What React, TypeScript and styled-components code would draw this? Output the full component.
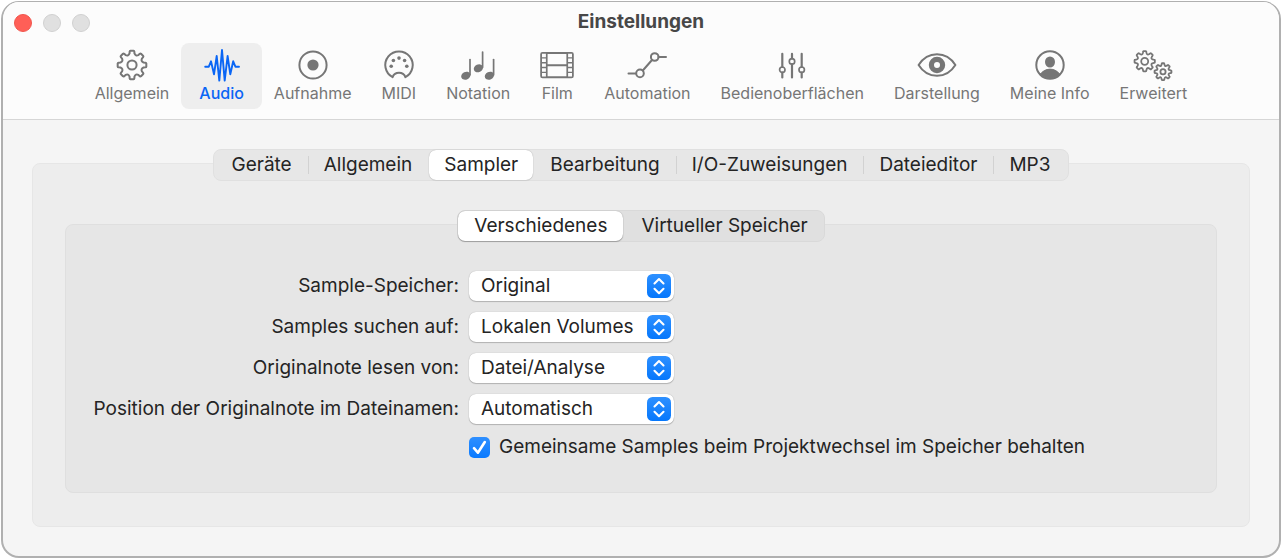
import React, { useState } from "react";
import styled, { createGlobalStyle, css } from "styled-components";

const GlobalStyle = createGlobalStyle`
  *, *::before, *::after { box-sizing: border-box; }
  body {
    margin: 0;
    background: #ffffff;
    color: #242424;
    font-family: Inter, "Liberation Sans", sans-serif;
    font-size: 19px;
    line-height: 24px;
  }
  button, select, input { font: inherit; color: inherit; }
`;

const Window = styled.main`
  margin: 1px 1px 2px;
  border: 2px solid #b0b0b0;
  border-top-width: 1px;
  border-radius: 18px;
  background: #f5f5f5;
  overflow: hidden;
`;

const Header = styled.header`
  background: #fcfcfc;
  border-bottom: 1px solid #d6d6d6;
  padding-bottom: 10px;
`;

const TitleBar = styled.div`
  display: grid;
  grid-template-columns: 1fr auto 1fr;
  align-items: center;
  height: 41px;
  padding: 0 11px;
`;

const Lights = styled.div`
  display: flex;
  gap: 11px;
`;

const Light = styled.button<{ $close?: boolean }>`
  width: 18px;
  height: 18px;
  padding: 0;
  border-radius: 50%;
  border: 1px solid ${(p) => (p.$close ? "#f0564e" : "#d0d0d0")};
  background: ${(p) => (p.$close ? "#ff5f57" : "#e0e0e0")};
`;

const Title = styled.h1`
  margin: 0;
  padding-bottom: 1px;
  font-size: 19px;
  line-height: 24px;
  font-weight: 700;
  color: #474747;
`;

const Toolbar = styled.nav`
  display: flex;
  justify-content: center;
`;

const Tool = styled.button<{ $active: boolean }>`
  display: flex;
  flex-direction: column;
  align-items: center;
  height: 66px;
  padding: 6px 15px 0;
  border: 0;
  border-radius: 8px;
  background: none;
  color: #767676;
  font-size: 16px;
  line-height: 22px;
  white-space: nowrap;
  ${(p) =>
    p.$active &&
    css`
      margin: 0 -3px;
      padding: 6px 18px 0;
      background: #eeeeee;
      color: #0a66f5;
      font-weight: 500;
    `}
  svg {
    display: block;
    height: 32px;
    margin-bottom: 1px;
    overflow: visible;
  }
`;

const Content = styled.div`
  padding: 29px;
`;

const Group = styled.section`
  display: flex;
  flex-direction: column;
`;

const Panel = styled.div<{ $inner?: boolean }>`
  margin-top: -18px;
  border-radius: 8px;
  border: 1px solid ${(p) => (p.$inner ? "#dfdfdf" : "#e6e6e6")};
  background: ${(p) => (p.$inner ? "#e6e6e6" : "#ededed")};
  padding: ${(p) => (p.$inner ? "46px 28px 33px" : "46px 32px 33px")};
`;

const Segments = styled.div<{ $inner?: boolean }>`
  position: relative;
  z-index: 1;
  align-self: center;
  display: flex;
  align-items: center;
  gap: 2px;
  height: 32px;
  padding: ${(p) => (p.$inner ? "0" : "0 3px")};
  border: 1px solid ${(p) => (p.$inner ? "#d9d9d9" : "#e0e0e0")};
  border-radius: 8px;
  background: ${(p) => (p.$inner ? "#e0e0e0" : "#e7e7e7")};
`;

const Segment = styled.button<{ $active: boolean; $inner?: boolean; $divided: boolean }>`
  display: flex;
  align-items: center;
  height: 30px;
  padding: ${(p) => (p.$inner ? "0 16px 1px" : "0 15px 1px")};
  border: 0;
  border-radius: 7px;
  background: none;
  white-space: nowrap;
  ${(p) =>
    p.$active &&
    css`
      background: #ffffff;
      box-shadow: 0 0 1px rgba(0, 0, 0, 0.35), 0 1px 1px rgba(0, 0, 0, ${p.$inner ? 0.25 : 0.05});
    `}
  ${(p) =>
    p.$divided &&
    css`
      &::before {
        content: "";
        flex: none;
        width: 1px;
        height: 18px;
        margin: 0 15px 0 -16px;
        background: #d2d2d2;
      }
    `}
`;

const Form = styled.form`
  display: grid;
  grid-template-columns: 365px minmax(0, 1fr);
  column-gap: 10px;
  row-gap: 11px;
  align-items: center;
`;

const FieldLabel = styled.label`
  justify-self: end;
  white-space: nowrap;
`;

const SelectBox = styled.div`
  position: relative;
  width: 205px;
  height: 30px;
  svg {
    position: absolute;
    top: 3px;
    right: 3px;
    pointer-events: none;
  }
`;

const Select = styled.select`
  appearance: none;
  display: block;
  width: 100%;
  height: 100%;
  padding: 0 30px 0 12px;
  border: 0;
  border-radius: 7px;
  background: #ffffff;
  box-shadow: 0 0 1px rgba(0, 0, 0, 0.3), 0 1px 1px rgba(0, 0, 0, 0.2);
`;

const CheckLabel = styled.label`
  grid-column: 2;
  display: flex;
  align-items: center;
  gap: 9px;
  white-space: nowrap;
`;

const CheckBox = styled.span`
  position: relative;
  width: 21px;
  height: 21px;
  svg {
    position: absolute;
    inset: 0;
    pointer-events: none;
  }
`;

const CheckInput = styled.input`
  appearance: none;
  display: block;
  width: 21px;
  height: 21px;
  margin: 0;
  border-radius: 5px;
  background: #ffffff;
  &:checked {
    background: linear-gradient(#2e8fff, #0a7aff);
  }
  &:not(:checked) + svg {
    display: none;
  }
`;

/* Closed outline of an eight-toothed gear around (cx, cy). */
function gear(cx: number, cy: number, outer: number, inner: number) {
  const at = (deg: number, r: number) => {
    const a = ((deg - 90) * Math.PI) / 180;
    return `${(cx + r * Math.cos(a)).toFixed(2)} ${(cy + r * Math.sin(a)).toFixed(2)}`;
  };
  let d = "";
  for (let i = 0; i < 8; i++) {
    const c = i * 45;
    d += `${i ? "L" : "M"}${at(c - 12, inner + 0.8)}L${at(c - 10, outer - 0.8)}Q${at(c - 9, outer)} ${at(c - 6, outer)}`;
    d += `L${at(c + 6, outer)}Q${at(c + 9, outer)} ${at(c + 10, outer - 0.8)}L${at(c + 12, inner + 0.8)}`;
    d += `Q${at(c + 22.5, inner - 1.6)} ${at(c + 33, inner + 0.8)}`;
  }
  return d + "Z";
}

type IconProps = { w: number; stroke?: number; children: React.ReactNode };
const Icon = ({ w, stroke = 2, children }: IconProps) => (
  <svg
    width={w}
    height={32}
    viewBox={`0 0 ${w} 32`}
    fill="none"
    stroke="currentColor"
    strokeWidth={stroke}
    strokeLinecap="round"
    strokeLinejoin="round"
    aria-hidden="true"
  >
    {children}
  </svg>
);

const Note = ({ x, y }: { x: number; y: number }) => (
  <g>
    <ellipse cx={x} cy={y} rx="4.8" ry="3.8" transform={`rotate(-25 ${x} ${y})`} fill="currentColor" stroke="none" />
    <path d={`M${x + 4.2} ${y - 1}V${y - 16.2}`} strokeWidth="1.7" />
  </g>
);

const tools: { name: string; icon: React.ReactNode }[] = [
  {
    name: "Allgemein",
    icon: (
      <Icon w={32}>
        <path d={gear(16, 16, 14.4, 11)} />
        <circle cx="16" cy="16" r="4.6" />
      </Icon>
    ),
  },
  {
    name: "Audio",
    icon: (
      <Icon w={36} stroke={1.9}>
        <path d="M1.2 17.7H4.8L7 12.3L10 25.3L12.7 7L15.3 31.6L18 1L20.7 31.6L23.6 7L26.3 25.3L29.2 12.3L31.4 17.7H35" />
      </Icon>
    ),
  },
  {
    name: "Aufnahme",
    icon: (
      <Icon w={32}>
        <circle cx="16" cy="16" r="13.6" />
        <circle cx="16" cy="16" r="5.6" fill="currentColor" stroke="none" />
      </Icon>
    ),
  },
  {
    name: "MIDI",
    icon: (
      <Icon w={32}>
        <path d="M9.6 28.2A13.7 13.7 0 1 1 22.4 28.2C21.4 25.4 19 23.8 16 23.8S10.6 25.4 9.6 28.2Z" />
        <g fill="currentColor" stroke="none">
          <circle cx="8.2" cy="17.2" r="1.8" />
          <circle cx="10.4" cy="11.5" r="1.8" />
          <circle cx="16" cy="9.1" r="1.8" />
          <circle cx="21.6" cy="11.5" r="1.8" />
          <circle cx="23.8" cy="17.2" r="1.8" />
        </g>
      </Icon>
    ),
  },
  {
    name: "Notation",
    icon: (
      <Icon w={34}>
        <Note x={4.8} y={26.7} />
        <Note x={17.4} y={19.3} />
        <Note x={28.4} y={26.7} />
      </Icon>
    ),
  },
  {
    name: "Film",
    icon: (
      <Icon w={34}>
        <path
          fill="currentColor"
          stroke="none"
          fillRule="evenodd"
          d={
            "M2.5 3H31.5A2.3 2.3 0 0 1 33.8 5.3V27A2.3 2.3 0 0 1 31.5 29.3H2.5A2.3 2.3 0 0 1 .2 27V5.3A2.3 2.3 0 0 1 2.5 3Z" +
            "M7.6 5H26.4V15.2H7.6ZM7.6 17.2H26.4V27.3H7.6Z" +
            [4.8, 9.5, 14.4, 19.3, 24.1].map((y) => `M2 ${y}H5.9V${y + 3.4}H2ZM28.1 ${y}H32V${y + 3.4}H28.1Z`).join("")
          }
        />
      </Icon>
    ),
  },
  {
    name: "Automation",
    icon: (
      <Icon w={38}>
        <path d="M.5 24.4H8M14.8 21.5L24 11M30.5 8H38" />
        <circle cx="12" cy="24.4" r="3.8" />
        <circle cx="26.7" cy="8" r="3.8" />
      </Icon>
    ),
  },
  {
    name: "Bedienoberflächen",
    icon: (
      <Icon w={26} stroke={2.2}>
        <path d="M3.3 4.8V18M3.3 23.6V28.4M13 4.8V9.6M13 15.2V28.4M22.7 4.8V18M22.7 23.6V28.4" />
        <g strokeWidth="1.7">
          <circle cx="3.3" cy="20.7" r="2.7" />
          <circle cx="13" cy="12.4" r="2.7" />
          <circle cx="22.7" cy="20.7" r="2.7" />
        </g>
      </Icon>
    ),
  },
  {
    name: "Darstellung",
    icon: (
      <Icon w={40}>
        <path d="M1.6 16C6 9 12.5 5.2 20 5.2S34 9 38.4 16C34 23 27.5 26.8 20 26.8S6 23 1.6 16Z" />
        <circle cx="20" cy="16" r="5.6" strokeWidth="5.2" />
      </Icon>
    ),
  },
  {
    name: "Meine Info",
    icon: (
      <Icon w={32}>
        <circle cx="16" cy="16" r="13.7" />
        <ellipse cx="16" cy="13" rx="5" ry="5.6" fill="currentColor" stroke="none" />
        <path d="M6.5 25A11.6 11.6 0 0 1 25.5 25A13.3 13.3 0 0 1 6.5 25Z" fill="currentColor" strokeWidth="1" />
      </Icon>
    ),
  },
  {
    name: "Erweitert",
    icon: (
      <Icon w={40} stroke={1.8}>
        <path d={gear(11.7, 12.3, 10.2, 7.8)} />
        <circle cx="11.7" cy="12.3" r="3.5" />
        <path d={gear(30, 22.7, 8.5, 6.5)} />
        <circle cx="30" cy="22.7" r="2.6" />
      </Icon>
    ),
  },
];

type TabsProps = { label: string; items: string[]; initial: number; inner?: boolean };
function Tabs({ label, items, initial, inner }: TabsProps) {
  const [current, setCurrent] = useState(initial);
  return (
    <Segments role="tablist" aria-label={label} $inner={inner}>
      {items.map((item, i) => (
        <Segment
          key={item}
          type="button"
          role="tab"
          aria-selected={i === current}
          $active={i === current}
          $inner={inner}
          $divided={i > 0 && i !== current && i !== current + 1}
          onClick={() => setCurrent(i)}
        >
          {item}
        </Segment>
      ))}
    </Segments>
  );
}

const fields = [
  { id: "storage", label: "Sample-Speicher:", value: "Original" },
  { id: "search", label: "Samples suchen auf:", value: "Lokalen Volumes" },
  { id: "root", label: "Originalnote lesen von:", value: "Datei/Analyse" },
  { id: "position", label: "Position der Originalnote im Dateinamen:", value: "Automatisch" },
];

const Chevrons = () => (
  <svg width="24" height="24" viewBox="0 0 24 24" aria-hidden="true">
    <defs>
      <linearGradient id="chevron-fill" x1="0" y1="0" x2="0" y2="1">
        <stop offset="0" stopColor="#2e90ff" />
        <stop offset="1" stopColor="#0577fc" />
      </linearGradient>
    </defs>
    <rect width="24" height="24" rx="5.5" fill="url(#chevron-fill)" />
    <path
      d="M7.5 9.4L12 5L16.5 9.4M7.5 14.8L12 19.2L16.5 14.8"
      fill="none"
      stroke="#ffffff"
      strokeWidth="2.1"
      strokeLinecap="round"
      strokeLinejoin="round"
    />
  </svg>
);

export default function App() {
  const [tool, setTool] = useState("Audio");
  return (
    <>
      <GlobalStyle />
      <Window>
        <Header>
          <TitleBar>
            <Lights>
              <Light type="button" $close aria-label="Schließen" />
              <Light type="button" aria-label="Minimieren" disabled />
              <Light type="button" aria-label="Zoomen" disabled />
            </Lights>
            <Title>Einstellungen</Title>
          </TitleBar>
          <Toolbar>
            {tools.map((t) => (
              <Tool key={t.name} type="button" $active={t.name === tool} onClick={() => setTool(t.name)}>
                {t.icon}
                {t.name}
              </Tool>
            ))}
          </Toolbar>
        </Header>
        <Content>
          <Group>
            <Tabs
              label="Audio"
              initial={2}
              items={["Geräte", "Allgemein", "Sampler", "Bearbeitung", "I/O-Zuweisungen", "Dateieditor", "MP3"]}
            />
            <Panel>
              <Group>
                <Tabs label="Sampler" initial={0} inner items={["Verschiedenes", "Virtueller Speicher"]} />
                <Panel $inner>
                  <Form>
                    {fields.map((f) => (
                      <React.Fragment key={f.id}>
                        <FieldLabel htmlFor={f.id}>{f.label}</FieldLabel>
                        <SelectBox>
                          <Select id={f.id} defaultValue={f.value}>
                            <option>{f.value}</option>
                          </Select>
                          <Chevrons />
                        </SelectBox>
                      </React.Fragment>
                    ))}
                    <CheckLabel>
                      <CheckBox>
                        <CheckInput type="checkbox" defaultChecked />
                        <svg width="21" height="21" viewBox="0 0 21 21" aria-hidden="true">
                          <path
                            d="M5 11.2L8.9 15.7L15.8 5"
                            fill="none"
                            stroke="#ffffff"
                            strokeWidth="2.6"
                            strokeLinecap="round"
                            strokeLinejoin="round"
                          />
                        </svg>
                      </CheckBox>
                      Gemeinsame Samples beim Projektwechsel im Speicher behalten
                    </CheckLabel>
                  </Form>
                </Panel>
              </Group>
            </Panel>
          </Group>
        </Content>
      </Window>
    </>
  );
}
